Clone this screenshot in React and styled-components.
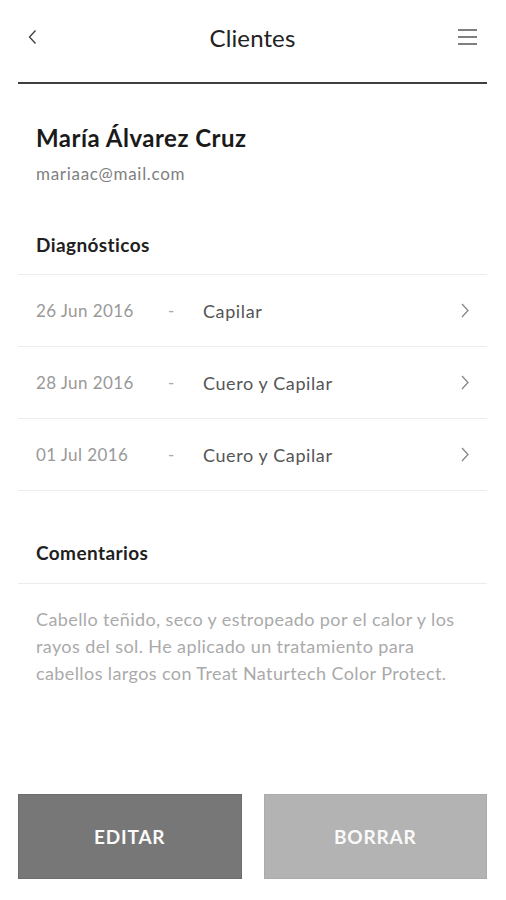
import React from "react";
import styled, { createGlobalStyle } from "styled-components";

const Global = createGlobalStyle`
  html, body { margin: 0; padding: 0; background: #fff; }
  body { font-family: Lato, "Noto Sans", sans-serif; -webkit-font-smoothing: antialiased; }
  * { box-sizing: border-box; }
`;

const Page = styled.div`
  width: 506px;
  min-height: 900px;
  padding: 0 19px 0 18px;
  display: flex;
  flex-direction: column;
`;

const Header = styled.header`
  height: 84px;
  border-bottom: 2px solid #3f3f3f;
  display: grid;
  grid-template-columns: 40px 1fr 40px;
  align-items: center;
  padding-bottom: 8px;
`;

const IconButton = styled.button`
  border: 0;
  background: none;
  padding: 0;
  display: flex;
  align-items: center;
  justify-content: ${(p) => (p.$end ? "flex-end" : "flex-start")};
  padding-left: ${(p) => (p.$end ? "0" : "10px")};
  padding-right: ${(p) => (p.$end ? "10px" : "0")};
  color: #444;
  height: 24px;
`;

const Title = styled.h1`
  margin: 0;
  text-align: center;
  font-size: 24px;
  font-weight: 400;
  color: #222;
  letter-spacing: 0.1px;
`;

const Section = styled.div`
  padding: 0 18px;
`;

const Name = styled.h2`
  margin: 39px 0 0;
  font-size: 24px;
  line-height: 30px;
  font-weight: 700;
  letter-spacing: 0.5px;
  color: #1a1a1a;
`;

const Email = styled.div`
  margin-top: 11px;
  font-size: 17px;
  line-height: 20px;
  letter-spacing: 0.7px;
  color: #808080;
`;

const Heading = styled.h3`
  margin: ${(p) => p.$top}px 0 0;
  padding: 0 18px ${(p) => p.$bottom}px;
  font-size: 19px;
  line-height: 24px;
  font-weight: 700;
  letter-spacing: 0.4px;
  color: #1f1f1f;
  border-bottom: 1px solid #ececec;
`;

const List = styled.ul`
  list-style: none;
  margin: 0;
  padding: 0;
`;

const Row = styled.li`
  height: 72px;
  border-bottom: 1px solid #ececec;
  display: grid;
  grid-template-columns: 132px 35px 1fr 24px;
  align-items: center;
  padding: 0 18px;
  font-size: 17px;
`;

const DateCell = styled.span`
  color: #999;
  letter-spacing: 0.4px;
`;

const Dash = styled.span`
  color: #aaa;
`;

const Label = styled.span`
  color: #555;
  font-size: 18px;
  letter-spacing: 0.6px;
`;

const Chevron = styled.span`
  display: flex;
  justify-content: flex-end;
  color: #888;
`;

const Comment = styled.p`
  margin: 22px 0 0;
  padding: 0 22px 0 18px;
  font-size: 18px;
  line-height: 27px;
  letter-spacing: 0.4px;
  color: #aaa;
`;

const Actions = styled.div`
  margin-top: 107px;
  display: grid;
  grid-template-columns: 1fr 1fr;
  gap: 22px;
`;

const ActionButton = styled.button`
  height: 85px;
  border: 1px solid ${(p) => (p.$variant === "primary" ? "#6d6d6d" : "#ababab")};
  background: ${(p) => (p.$variant === "primary" ? "#777777" : "#b3b3b3")};
  color: #fafafa;
  font-family: Lato, "Noto Sans", sans-serif;
  font-size: 19px;
  font-weight: 700;
  letter-spacing: 0.8px;
`;

const diagnostics = [
  { date: "26 Jun 2016", label: "Capilar" },
  { date: "28 Jun 2016", label: "Cuero y Capilar" },
  { date: "01 Jul 2016", label: "Cuero y Capilar" },
];

export default function App() {
  return (
    <>
      <Global />
      <Page>
        <Header>
          <IconButton aria-label="Atrás">
            <svg width="9" height="16" viewBox="0 0 9 16" fill="none">
              <path d="M7.5 1.5L1.5 8l6 6.5" stroke="#444" strokeWidth="1.4" />
            </svg>
          </IconButton>
          <Title>Clientes</Title>
          <IconButton $end aria-label="Menú">
            <svg width="19" height="16" viewBox="0 0 19 16" fill="none">
              <path d="M0 1h19M0 8h19M0 15h19" stroke="#555" strokeWidth="1.4" />
            </svg>
          </IconButton>
        </Header>

        <Section>
          <Name>María Álvarez Cruz</Name>
          <Email>mariaac@mail.com</Email>
        </Section>

        <Heading $top={49} $bottom={17}>Diagnósticos</Heading>
        <List>
          {diagnostics.map((d) => (
            <Row key={d.date}>
              <DateCell>{d.date}</DateCell>
              <Dash>-</Dash>
              <Label>{d.label}</Label>
              <Chevron>
                <svg width="8" height="15" viewBox="0 0 8 15" fill="none">
                  <path d="M1 1l6 6.5L1 14" stroke="#888" strokeWidth="1.3" />
                </svg>
              </Chevron>
            </Row>
          ))}
        </List>

        <Heading $top={50} $bottom={18}>Comentarios</Heading>
        <Comment>
          Cabello teñido, seco y estropeado por el calor y los rayos del sol. He aplicado un
          tratamiento para cabellos largos con Treat Naturtech Color Protect.
        </Comment>

        <Actions>
          <ActionButton $variant="primary">EDITAR</ActionButton>
          <ActionButton>BORRAR</ActionButton>
        </Actions>
      </Page>
    </>
  );
}
